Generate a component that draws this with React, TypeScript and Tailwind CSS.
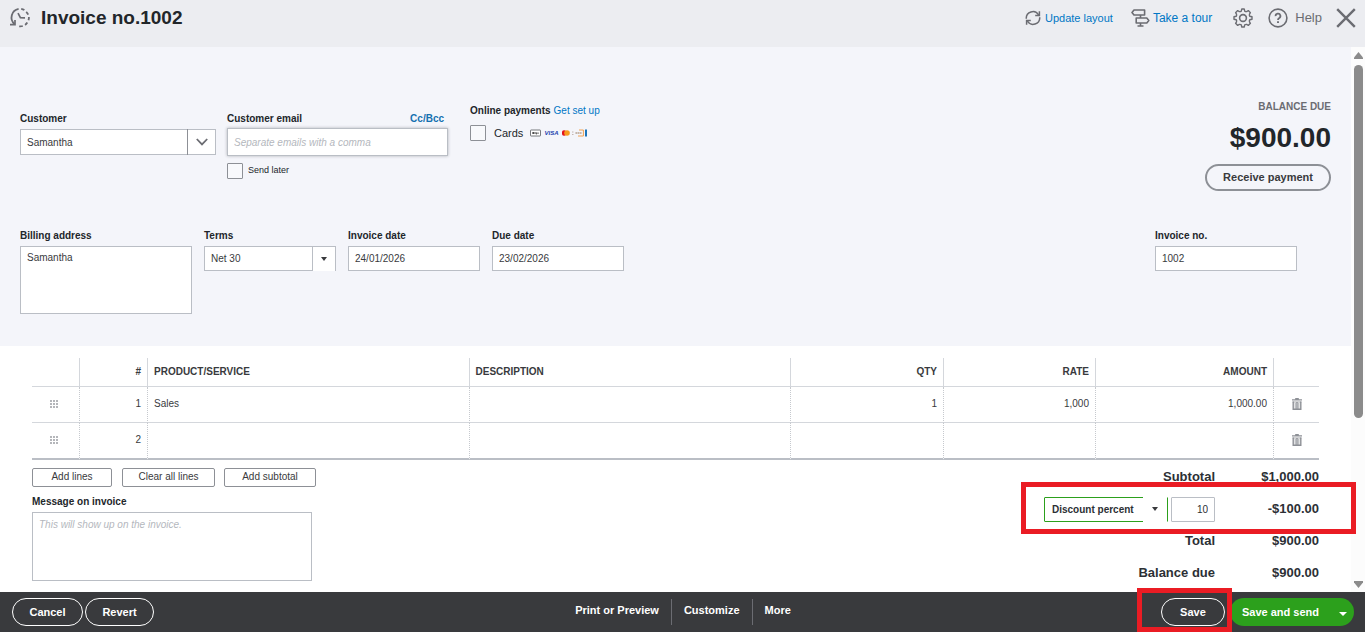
import React from "react";

const lines = [
   { no: 1, product: "Sales", qty: "1", rate: "1,000", amount: "1,000.00" },
   { no: 2, product: "", qty: "", rate: "", amount: "" },
];

const label = "block text-[10px] leading-[14px] font-bold text-[#22262a]";
const field =
   "block border border-[#babec5] bg-white px-[6px] text-[10px] text-[#393a3d] rounded-none outline-none";

const HistoryIcon = () => (
   <svg width="22" height="22" viewBox="0 0 22 22" fill="none" stroke="#6b6c72" strokeWidth="1.8">
      <path d="M5.6 17.2A8.8 8.8 0 0 1 9.6 1.9" />
      <path d="M12.2 1.9A8.8 8.8 0 0 1 15.4 3.1M17.2 4.8A8.8 8.8 0 0 1 19.2 7.7M19.9 10A8.8 8.8 0 0 1 19.5 13.2M18.3 15.6A8.8 8.8 0 0 1 16.1 17.9M13.8 19A8.8 8.8 0 0 1 10.2 19.3" />
      <path d="M1 17.7H6V13" strokeWidth="1.7" />
      <path d="M9 6.2L11.4 10.6L16 10.8" strokeWidth="1.7" />
   </svg>
);

const RefreshIcon = () => (
   <svg width="16" height="16" viewBox="0 0 16 16" fill="none" stroke="#6b6c72" strokeWidth="1.5">
      <path d="M1.3 8.8A6.6 6.6 0 0 1 13.6 5" />
      <path d="M14.7 7.2A6.6 6.6 0 0 1 2.4 11" />
      <path d="M14.4 1.2V5.4H10.2" />
      <path d="M1.6 14.8V10.6H5.8" />
   </svg>
);

const SignpostIcon = () => (
   <svg width="19" height="18" viewBox="0 0 19 18" fill="none" stroke="#6b6c72" strokeWidth="1.6" strokeLinejoin="round">
      <path d="M3 1H13.6V6H3L1 3.5Z" />
      <path d="M15.8 9H5.2V14H15.8L17.8 11.5Z" />
      <path d="M9.5 6V9M9.5 14V17M6.5 17H12.5" />
   </svg>
);

// eight rounded teeth around a hub
const GearIcon = () => (
   <svg width="20" height="20" viewBox="0 0 20 20" fill="none" stroke="#6b6c72" strokeWidth="1.4" strokeLinejoin="round">
      <path d="M8.8 1H11.2L11.8 3.2Q12.7 3.9 13.9 3.5L15.3 2.6L17.4 4.7L16.5 6.1Q16.1 7.3 16.8 8.2L19 8.8V11.2L16.8 11.8Q16.1 12.7 16.5 13.9L17.4 15.3L15.3 17.4L13.9 16.5Q12.7 16.1 11.8 16.8L11.2 19H8.8L8.2 16.8Q7.3 16.1 6.1 16.5L4.7 17.4L2.6 15.3L3.5 13.9Q3.9 12.7 3.2 11.8L1 11.2V8.8L3.2 8.2Q3.9 7.3 3.5 6.1L2.6 4.7L4.7 2.6L6.1 3.5Q7.3 3.9 8.2 3.2Z" />
      <circle cx="10" cy="10" r="3.4" strokeWidth="1.6" />
   </svg>
);

const HelpIcon = () => (
   <svg width="20" height="20" viewBox="0 0 20 20" fill="none" stroke="#6b6c72" strokeWidth="1.6">
      <circle cx="10" cy="10" r="8.9" />
      <path d="M7.6 8.1A2.4 2.4 0 1 1 11 10.2C10.3 10.6 10 10.9 10 11.9" strokeWidth="1.8" />
      <path d="M10 13.3V15.1" strokeWidth="1.9" />
   </svg>
);

const CloseIcon = () => (
   <svg width="20" height="20" viewBox="0 0 20 20" fill="none" stroke="#6b6c72" strokeWidth="2.4">
      <path d="M1.2 1.2L18.8 18.8M18.8 1.2L1.2 18.8" />
   </svg>
);

const Caret = () => (
   <svg width="6" height="4" viewBox="0 0 6 4" fill="#393a3d">
      <path d="M0 0H6L3 4Z" />
   </svg>
);

const TrashIcon = () => (
   <svg width="10" height="12" viewBox="0 0 10 12" fill="none" stroke="#8d9096">
      <path d="M0 1.8H10M3.2 0.6H6.8" strokeWidth="1.2" />
      <path d="M1.2 3.4V11.3H8.8V3.4M5 4V11" strokeWidth="1.4" />
      <path d="M0.6 4H9.4M3.2 5V11M6.8 5V11" strokeWidth="0.8" />
   </svg>
);

const GripIcon = () => (
   <svg width="9" height="8" viewBox="0 0 9 8" fill="#b4b6ba">
      {[0, 3, 6].map((y) =>
         [0, 3, 6].map((x) => <rect key={x + "-" + y} x={x} y={y} width="2" height="2" />)
      )}
   </svg>
);

const CardLogos = () => (
   <svg width="58" height="8" viewBox="0 0 58 8">
      <rect x="0.5" y="1" width="10" height="6" rx="0.5" fill="#fff" stroke="#55585c" strokeWidth="0.8" />
      <circle cx="3.2" cy="4" r="1" fill="#333" />
      <path d="M5 3V5M6.4 3.4V5.4M8 3.4V5" stroke="#333" strokeWidth="0.9" />
      <text x="14.5" y="6.3" fontSize="6" fontWeight="bold" fontStyle="italic" fill="#1c3fae" fontFamily="Liberation Sans, Arial, sans-serif">
         VISA
      </text>
      <rect x="32" y="1.2" width="4.2" height="5.6" rx="1.8" fill="#e3131b" />
      <circle cx="37" cy="4" r="2.8" fill="#f79a1c" />
      <path d="M42 3H43.5M42 5.5H43.5" stroke="#b8a6a0" strokeWidth="0.8" />
      <path d="M45.5 4H52" stroke="#8c6a48" strokeWidth="1.2" strokeDasharray="1.4 0.6" />
      <path d="M49 1H53.4V7H48" fill="none" stroke="#f09a3e" strokeWidth="0.9" />
      <rect x="55" y="0.5" width="2" height="7" fill="#1d74b8" />
   </svg>
);

const App = () => {
   return (
      <div className="h-screen flex flex-col overflow-hidden bg-white text-[#393a3d] font-['Liberation_Sans',Arial,sans-serif]">
         <header className="shrink-0 bg-[#ecedf1] pb-[11px]">
            <div className="h-9 flex items-center justify-between pl-[9px] pr-[9px]">
               <div className="flex items-center gap-[10px]">
                  <HistoryIcon />
                  <h1 className="text-[19px] leading-6 font-bold text-[#22262a]">Invoice no.1002</h1>
               </div>
               <div className="flex items-center">
                  <a href="#" className="flex items-center gap-1 text-[11px] text-[#0077c5] mr-[18px]">
                     <RefreshIcon />
                     Update layout
                  </a>
                  <a href="#" className="flex items-center gap-[3px] text-[12px] text-[#0077c5] mr-[21px]">
                     <SignpostIcon />
                     Take a tour
                  </a>
                  <button aria-label="Settings" className="mr-[15px]">
                     <GearIcon />
                  </button>
                  <button className="flex items-center gap-[7px] text-[13px] text-[#6b6c72] mr-[14px]">
                     <HelpIcon />
                     Help
                  </button>
                  <button aria-label="Close">
                     <CloseIcon />
                  </button>
               </div>
            </div>
         </header>

         <div className="flex-1 min-h-0 flex overflow-hidden">
            <main className="flex-1 min-w-0">
               <section className="bg-[#f4f5fa] pt-[53px] pb-8 pl-5">
                  <div className="flex items-start pr-5">
                     <div className="mt-3 w-[196px]">
                        <label htmlFor="customer" className={label}>
                           Customer
                        </label>
                        <div className="relative mt-[3px]">
                           <select id="customer" className={field + " w-full h-[26px] appearance-none"}>
                              <option>Samantha</option>
                           </select>
                           <span className="absolute right-0 inset-y-0 w-[29px] border-l border-[#8d9096] flex items-center justify-center pointer-events-none">
                              <svg width="12" height="8" viewBox="0 0 12 8" fill="none" stroke="#6b6c72" strokeWidth="1.8">
                                 <path d="M0.8 1L6 6.4L11.2 1" />
                              </svg>
                           </span>
                        </div>
                     </div>

                     <div className="mt-3 ml-[11px] w-[221px]">
                        <div className="flex justify-between pr-1">
                           <label htmlFor="email" className={label}>
                              Customer email
                           </label>
                           <a href="#" className="text-[10px] leading-[14px] font-bold text-[#1470b0]">
                              Cc/Bcc
                           </a>
                        </div>
                        <input
                           id="email"
                           placeholder="Separate emails with a comma"
                           className={field + " mt-[2px] w-full h-7 shadow-[0_0_3px_#b0b2b8] placeholder:italic placeholder:text-[#b4b7bd]"}
                        />
                        <label className="mt-[7px] flex items-center gap-[5px] text-[9px] text-[#22262a]">
                           <input type="checkbox" className="appearance-none size-4 border border-[#8d9096] rounded-[1px] bg-[#f8f9fc]" />
                           Send later
                        </label>
                     </div>

                     <div className="mt-1 ml-[22px]">
                        <div className="flex gap-[3px]">
                           <span className={label}>Online payments</span>
                           <a href="#" className="text-[10px] leading-[14px] text-[#0077c5]">
                              Get set up
                           </a>
                        </div>
                        <div className="mt-[7px] flex items-center gap-[7px]">
                           <label className="flex items-center gap-2 text-[11px] text-[#22262a]">
                              <input type="checkbox" className="appearance-none size-4 border border-[#8d9096] rounded-[1px] bg-[#f8f9fc]" />
                              Cards
                           </label>
                           <CardLogos />
                        </div>
                     </div>

                     <div className="ml-auto flex flex-col items-end">
                        <p className="text-[10px] leading-[14px] text-[#6b6c72] font-bold">BALANCE DUE</p>
                        <p className="mt-[7px] text-[28px] leading-[34px] font-bold text-[#22262a]">$900.00</p>
                        <button className="mt-[9px] h-[27px] px-4 rounded-full border-2 border-[#8d9096] text-[11px] font-bold">
                           Receive payment
                        </button>
                     </div>
                  </div>

                  <div className="mt-[38px] flex items-start gap-3 pr-[54px]">
                     <div className="w-[172px]">
                        <label htmlFor="billing" className={label}>
                           Billing address
                        </label>
                        <textarea
                           id="billing"
                           defaultValue="Samantha"
                           className={field + " mt-[3px] w-full h-[68px] py-1 leading-[14px] resize-none"}
                        />
                     </div>
                     <div className="w-[132px]">
                        <label htmlFor="terms" className={label}>
                           Terms
                        </label>
                        <div className="relative mt-[3px]">
                           <select id="terms" className={field + " w-full h-[25px] appearance-none"}>
                              <option>Net 30</option>
                           </select>
                           <span className="absolute right-px top-px bottom-0 w-[23px] border-l border-[#babec5] bg-white flex items-center justify-center pointer-events-none">
                              <Caret />
                           </span>
                        </div>
                     </div>
                     <div className="w-[132px]">
                        <label htmlFor="invoice-date" className={label}>
                           Invoice date
                        </label>
                        <input id="invoice-date" defaultValue="24/01/2026" className={field + " mt-[3px] w-full h-[25px]"} />
                     </div>
                     <div className="w-[132px]">
                        <label htmlFor="due-date" className={label}>
                           Due date
                        </label>
                        <input id="due-date" defaultValue="23/02/2026" className={field + " mt-[3px] w-full h-[25px]"} />
                     </div>
                     <div className="w-[142px] ml-auto">
                        <label htmlFor="invoice-no" className={label}>
                           Invoice no.
                        </label>
                        <input id="invoice-no" defaultValue="1002" className={field + " mt-[3px] w-full h-[25px]"} />
                     </div>
                  </div>
               </section>

               <section className="px-8 pt-3">
                  <table className="w-full table-fixed border-separate border-spacing-0 text-[10px]">
                     <thead>
                        <tr className="h-[29px] text-[#393a3d] [&>th]:border-b [&>th]:border-[#d4d7dc] [&>th]:px-[6px] [&>th]:pb-[2px] [&>th:not(:last-child)]:border-r">
                           <th className="w-12" aria-label="Move" />
                           <th className="w-[68px] text-right">#</th>
                           <th className="text-left">PRODUCT/SERVICE</th>
                           <th className="text-left">DESCRIPTION</th>
                           <th className="w-[153px] text-right">QTY</th>
                           <th className="w-[152px] text-right">RATE</th>
                           <th className="w-[178px] text-right">AMOUNT</th>
                           <th className="w-[45px]" aria-label="Delete" />
                        </tr>
                     </thead>
                     <tbody>
                        {lines.map((line) => (
                           <tr
                              key={line.no}
                              className="h-9 last:h-[37px] [&>td]:border-b [&>td]:[border-bottom-color:#d4d7dc] last:[&>td]:border-b-2 last:[&>td]:[border-bottom-color:#babec5] [&>td]:px-[6px] [&>td]:pb-[2px] [&>td:not(:last-child)]:border-r [&>td:not(:last-child)]:[border-right-style:dotted] [&>td:not(:last-child)]:[border-right-color:#c6c9ce]"
                           >
                              <td>
                                 <div className="flex justify-center pr-[2px]">
                                    <GripIcon />
                                 </div>
                              </td>
                              <td className="text-right">{line.no}</td>
                              <td>{line.product}</td>
                              <td></td>
                              <td className="text-right">{line.qty}</td>
                              <td className="text-right">{line.rate}</td>
                              <td className="text-right">{line.amount}</td>
                              <td>
                                 <button aria-label="Delete line" className="mx-auto block">
                                    <TrashIcon />
                                 </button>
                              </td>
                           </tr>
                        ))}
                     </tbody>
                  </table>

                  <div className="flex items-start justify-between">
                     <div className="pt-2">
                        <div className="flex">
                           <button className="h-[19px] w-20 border border-[#8d9096] rounded-[2px] text-[10px] leading-[14px] pb-[2px]">
                              Add lines
                           </button>
                           <button className="ml-[10px] h-[19px] w-[93px] border border-[#8d9096] rounded-[2px] text-[10px] leading-[14px] pb-[2px]">
                              Clear all lines
                           </button>
                           <button className="ml-[9px] h-[19px] w-[92px] border border-[#8d9096] rounded-[2px] text-[10px] leading-[14px] pb-[2px]">
                              Add subtotal
                           </button>
                        </div>
                        <label htmlFor="message" className={label + " mt-2"}>
                           Message on invoice
                        </label>
                        <textarea
                           id="message"
                           placeholder="This will show up on the invoice."
                           className={field + " mt-[3px] w-[280px] h-[69px] py-[5px] leading-[14px] resize-none placeholder:italic placeholder:text-[#b4b7bd]"}
                        />
                     </div>

                     <div className="relative pt-px text-[13px] font-bold text-[#2c3035] [&>div]:h-8 [&>div]:flex [&>div]:items-center [&>div]:justify-end">
                        <div>
                           <span>Subtotal</span>
                           <span className="w-[104px] text-right">$1,000.00</span>
                        </div>
                        <div>
                           <span className="relative">
                              <select
                                 aria-label="Discount type"
                                 className="block appearance-none w-[124px] h-[25px] border border-[#2ca01c] rounded-[1px] bg-white pl-[7px] pt-px text-[10px] font-bold outline-none"
                              >
                                 <option>Discount percent</option>
                              </select>
                              <span className="absolute right-px inset-y-0 w-6 bg-white flex items-center justify-center pointer-events-none">
                                 <Caret />
                              </span>
                           </span>
                           <input
                              aria-label="Discount"
                              defaultValue="10"
                              className="ml-[3px] w-11 h-[25px] border border-[#babec5] rounded-[1px] px-[6px] text-[10px] font-normal text-right outline-none"
                           />
                           <span className="w-[104px] text-right">-$100.00</span>
                        </div>
                        <div>
                           <span>Total</span>
                           <span className="w-[104px] text-right">$900.00</span>
                        </div>
                        <div>
                           <span>Balance due</span>
                           <span className="w-[104px] text-right">$900.00</span>
                        </div>
                        {/* highlight around the discount row */}
                        <p className="absolute top-[22px] -left-[23px] -right-[37px] h-[52px] border-[5px] border-[#ea1c24] pointer-events-none" />
                     </div>
                  </div>
               </section>
            </main>

            {/* scrollbar */}
            <div className="w-[14px] shrink-0 bg-[#fcfcfc] flex flex-col items-center pl-px pt-[5px] pb-1">
               <svg width="9" height="7" viewBox="0 0 9 7" fill="#8b8b8b">
                  <path d="M4.5 0L9 5.5V7H0V5.5Z" />
               </svg>
               <div className="mt-[6px] w-[9px] h-[353px] rounded-full bg-[#8b8b8b]" />
               <svg className="mt-auto" width="9" height="7" viewBox="0 0 9 7" fill="#8b8b8b">
                  <path d="M4.5 7L9 1.5V0H0V1.5Z" />
               </svg>
            </div>
         </div>

         <footer className="shrink-0 h-10 bg-[#393a3d] grid grid-cols-[1fr_auto_1fr] items-center pl-3 pr-[11px] text-white text-[11px] font-bold">
            <div className="flex gap-[2px]">
               <button className="h-7 w-[71px] rounded-full border border-white">Cancel</button>
               <button className="h-7 w-[69px] rounded-full border border-white">Revert</button>
            </div>
            <div className="flex h-[26px] items-stretch divide-x divide-[#6b6c72] [&>button]:pb-[3px]">
               <button className="pr-3">Print or Preview</button>
               <button className="px-3">Customize</button>
               <button className="pl-3">More</button>
            </div>
            <div className="flex justify-end">
               <div className="relative mr-[5px]">
                  <button className="h-7 w-16 rounded-full border border-white">Save</button>
                  <span className="absolute -top-[10px] -left-6 -right-[7px] h-11 border-[5px] border-[#ea1c24] pointer-events-none" />
               </div>
               <button className="h-7 pl-3 rounded-l-full bg-[#2ca01c]">Save and send</button>
               <button aria-label="More save options" className="h-7 w-[35px] pl-[12px] pt-[3px] rounded-r-full bg-[#2ca01c] flex items-center justify-center">
                  <svg width="8" height="4" viewBox="0 0 8 4" fill="#fff">
                     <path d="M0 0H8L4 4Z" />
                  </svg>
               </button>
            </div>
         </footer>
      </div>
   );
};

export default App;
